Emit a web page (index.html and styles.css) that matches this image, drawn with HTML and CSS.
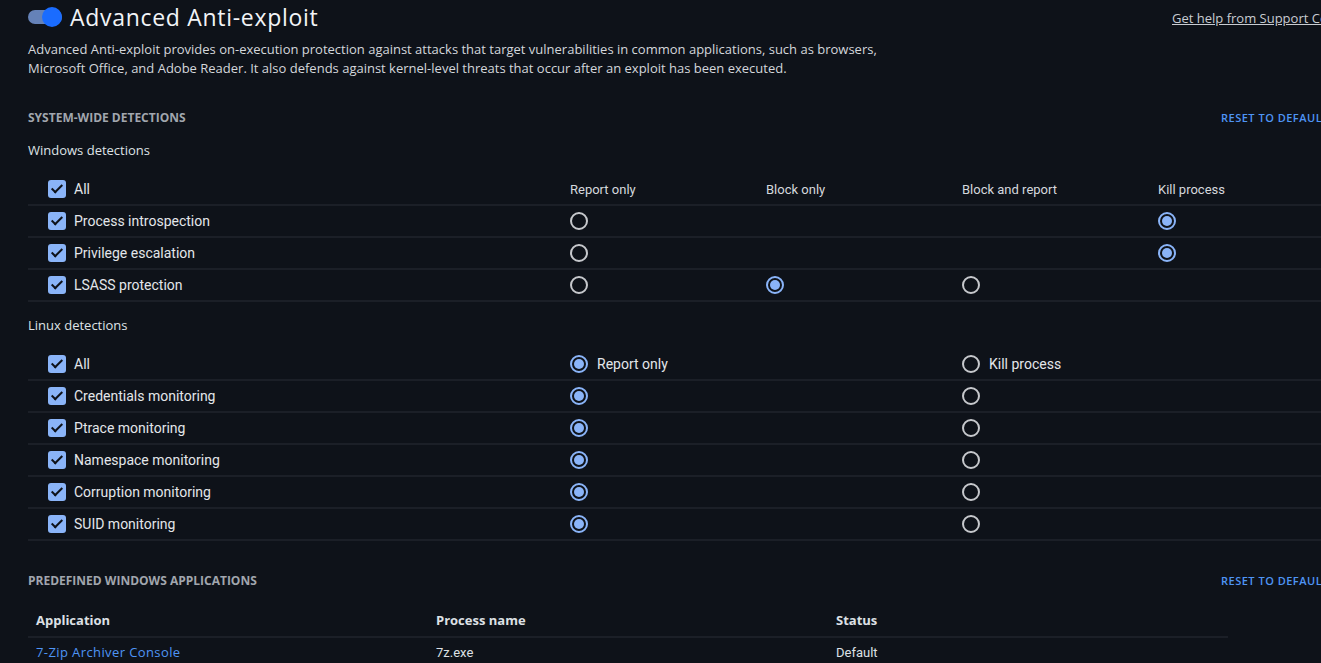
FILE: index.html
```html
<!DOCTYPE html>
<html>
<head>
<meta charset="utf-8">
<link rel="stylesheet" href="styles.css">
</head>
<body>
<div class="page">
  <header class="top">
    <div class="title-wrap">
      <span class="toggle"><span class="knob"></span></span>
      <h1 class="title">Advanced Anti-exploit</h1>
    </div>
    <a class="help" href="#">Get help from Support Center</a>
  </header>
  <p class="desc">Advanced Anti-exploit provides on-execution protection against attacks that target vulnerabilities in common applications, such as browsers,<br>Microsoft Office, and Adobe Reader. It also defends against kernel-level threats that occur after an exploit has been executed.</p>

  <div class="section-head">
    <h2 class="section-title">SYSTEM-WIDE DETECTIONS</h2>
    <a class="reset" href="#">RESET TO DEFAULT</a>
  </div>

  <div class="group-title">Windows detections</div>
  <div class="grid win">
    <div class="row head">
      <div class="cell label"><span class="cb"></span>All</div>
      <div class="cell">Report only</div>
      <div class="cell">Block only</div>
      <div class="cell">Block and report</div>
      <div class="cell">Kill process</div>
    </div>
    <div class="row">
      <div class="cell label"><span class="cb"></span>Process introspection</div>
      <div class="cell"><span class="radio"></span></div>
      <div class="cell"></div>
      <div class="cell"></div>
      <div class="cell"><span class="radio on"></span></div>
    </div>
    <div class="row">
      <div class="cell label"><span class="cb"></span>Privilege escalation</div>
      <div class="cell"><span class="radio"></span></div>
      <div class="cell"></div>
      <div class="cell"></div>
      <div class="cell"><span class="radio on"></span></div>
    </div>
    <div class="row">
      <div class="cell label"><span class="cb"></span>LSASS protection</div>
      <div class="cell"><span class="radio"></span></div>
      <div class="cell"><span class="radio on"></span></div>
      <div class="cell"><span class="radio"></span></div>
      <div class="cell"></div>
    </div>
  </div>

  <div class="group-title linux-title">Linux detections</div>
  <div class="grid lin">
    <div class="row">
      <div class="cell label"><span class="cb"></span>All</div>
      <div class="cell"><span class="radio on"></span>Report only</div>
      <div class="cell"><span class="radio"></span>Kill process</div>
    </div>
    <div class="row">
      <div class="cell label"><span class="cb"></span>Credentials monitoring</div>
      <div class="cell"><span class="radio on"></span></div>
      <div class="cell"><span class="radio"></span></div>
    </div>
    <div class="row">
      <div class="cell label"><span class="cb"></span>Ptrace monitoring</div>
      <div class="cell"><span class="radio on"></span></div>
      <div class="cell"><span class="radio"></span></div>
    </div>
    <div class="row">
      <div class="cell label"><span class="cb"></span>Namespace monitoring</div>
      <div class="cell"><span class="radio on"></span></div>
      <div class="cell"><span class="radio"></span></div>
    </div>
    <div class="row">
      <div class="cell label"><span class="cb"></span>Corruption monitoring</div>
      <div class="cell"><span class="radio on"></span></div>
      <div class="cell"><span class="radio"></span></div>
    </div>
    <div class="row">
      <div class="cell label"><span class="cb"></span>SUID monitoring</div>
      <div class="cell"><span class="radio on"></span></div>
      <div class="cell"><span class="radio"></span></div>
    </div>
  </div>

  <div class="section-head second">
    <h2 class="section-title">PREDEFINED WINDOWS APPLICATIONS</h2>
    <a class="reset" href="#">RESET TO DEFAULT</a>
  </div>

  <div class="apps">
    <div class="app-row app-head">
      <div class="acell">Application</div>
      <div class="acell">Process name</div>
      <div class="acell">Status</div>
    </div>
    <div class="app-row app-body">
      <div class="acell"><a class="app-link" href="#">7-Zip Archiver Console</a></div>
      <div class="acell plain">7z.exe</div>
      <div class="acell plain">Default</div>
    </div>
  </div>
</div>
</body>
</html>
```

FILE: styles.css
```css
html, body {
  margin: 0;
  padding: 0;
  background: #0e1219;
  overflow: hidden;
  height: 100%;
}
.page {
  width: 1400px;
  padding-left: 28px;
  box-sizing: border-box;
  color: #e3e6ea;
  font-family: Roboto, "Liberation Sans", sans-serif;
}
.top {
  display: grid;
  grid-template-columns: 1144px auto;
  align-items: center;
  height: 34px;
}
.title-wrap {
  display: flex;
  align-items: center;
}
.toggle {
  position: relative;
  width: 34px;
  height: 14px;
  border-radius: 7px;
  background: #6582b8;
  margin-right: 8px;
}
.knob {
  position: absolute;
  right: 0;
  top: -3px;
  width: 20px;
  height: 20px;
  border-radius: 50%;
  background: #1a6cff;
}
.title {
  margin: 0;
  font-family: "Open Sans", sans-serif;
  font-weight: 500;
  font-size: 23px;
  color: #f2f4f7;
  letter-spacing: 0.7px;
}
.help {
  font-family: "Open Sans", sans-serif;
  font-size: 13px;
  color: #c9ccd2;
  text-decoration: underline;
  white-space: nowrap;
  margin-top: 2px;
}
.desc {
  margin: 6px 0 0 0;
  font-family: "Open Sans", sans-serif;
  font-size: 13px;
  line-height: 19px;
  color: #d4d7dc;
  white-space: nowrap;
}
.section-head {
  display: grid;
  grid-template-columns: 1193px auto;
  align-items: center;
  margin-top: 29px;
  height: 20px;
}
.section-head.second {
  margin-top: 29px;
}
.section-title {
  margin: 0;
  font-family: "Open Sans", sans-serif;
  font-size: 12px;
  font-weight: 700;
  color: #a1a6ae;
}
.reset {
  font-family: "Open Sans", sans-serif;
  font-size: 11px;
  font-weight: 600;
  color: #4f95f5;
  text-decoration: none;
  white-space: nowrap;
  letter-spacing: 0.5px;
}
.group-title {
  font-family: "Open Sans", sans-serif;
  font-size: 13px;
  color: #dfe2e6;
  height: 20px;
  line-height: 20px;
  margin-top: 13px;
}
.linux-title {
  margin-top: 13px;
}
.grid {
  margin-top: 14px;
}
.lin {
  margin-top: 14px;
}
.row {
  display: grid;
  height: 32px;
  align-items: center;
  border-bottom: 2px solid #1b1f27;
  box-sizing: border-box;
  font-size: 14px;
}
.win .row {
  grid-template-columns: 542px 196px 196px 196px 196px;
}
.lin .row {
  grid-template-columns: 542px 392px 392px;
}
.cell {
  display: flex;
  align-items: center;
  gap: 9px;
}
.head .cell {
  font-size: 13px;
  color: #d5d8dd;
}
.head .cell.label {
  font-size: 14px;
  color: #e3e6ea;
}
.cell.label {
  padding-left: 20px;
  gap: 8px;
}
.cb {
  width: 18px;
  height: 18px;
  border-radius: 3px;
  background: #8ab4f8;
  position: relative;
  flex: none;
}
.cb::after {
  content: "";
  position: absolute;
  left: 6px;
  top: 2px;
  width: 4px;
  height: 9px;
  border: solid #0e1219;
  border-width: 0 2px 2px 0;
  transform: rotate(45deg);
}
.radio {
  width: 18px;
  height: 18px;
  border: 2px solid #c6c8cc;
  border-radius: 50%;
  box-sizing: border-box;
  flex: none;
  position: relative;
}
.radio.on {
  border-color: #8ab4f8;
}
.radio.on::after {
  content: "";
  position: absolute;
  left: 2px;
  top: 2px;
  width: 10px;
  height: 10px;
  border-radius: 50%;
  background: #8ab4f8;
}
.apps {
  width: 1200px;
  margin-top: 14px;
}
.app-row {
  display: grid;
  grid-template-columns: 400px 400px 400px;
  align-items: center;
}
.app-head {
  border-bottom: 2px solid #1b1f27;
  height: 32px;
}
.app-body {
  height: 28px;
}
.acell {
  padding-left: 8px;
  font-family: "Open Sans", sans-serif;
  font-size: 13px;
  font-weight: 700;
  color: #dde0e5;
}
.acell.plain {
  font-family: Roboto, sans-serif;
  font-weight: 400;
  font-size: 13px;
}
.app-body .acell {
  font-weight: 400;
}
.app-link {
  color: #4f95f5;
  text-decoration: none;
  letter-spacing: 0.4px;
}
```
